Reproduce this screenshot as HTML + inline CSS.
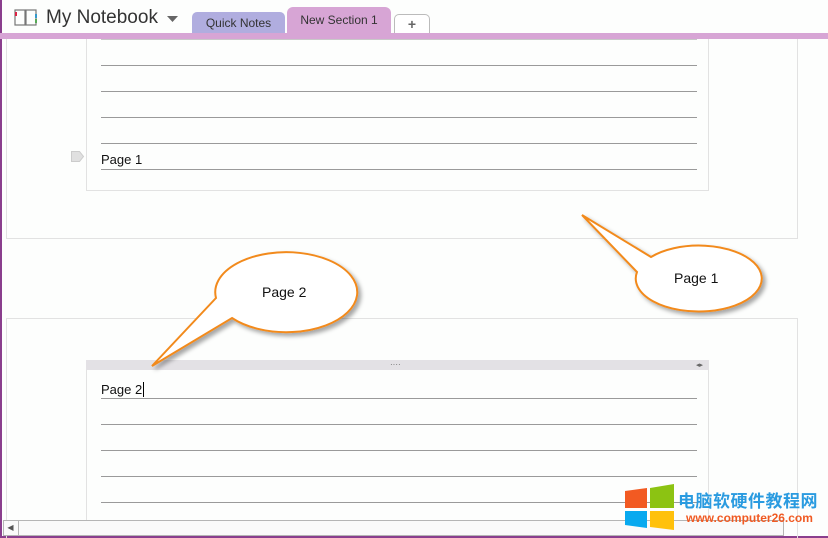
<!DOCTYPE html>
<html><head><meta charset="utf-8"><style>
*{margin:0;padding:0;box-sizing:border-box}
body{width:828px;height:538px;overflow:hidden;background:#fdfefd;font-family:"Liberation Sans",sans-serif;position:relative}
.a{position:absolute}
.line{position:absolute;left:101px;width:596px;height:1px;background:#9a9a9a}
.pt{position:absolute;left:101px;font-size:13px;color:#111}
</style></head><body>
<div class="a" style="left:0;top:0;width:2px;height:538px;background:#8a3e8d"></div>
<div class="a" style="left:0;top:536px;width:828px;height:2px;background:#8a3e8d"></div>
<!-- header -->
<svg class="a" style="left:14px;top:9px" width="26" height="18"><rect x="1" y="1" width="10" height="15" fill="none" stroke="#777" stroke-width="1.2"/><rect x="12" y="1" width="10" height="15" fill="none" stroke="#777" stroke-width="1.2"/><rect x="1" y="3" width="2" height="4" fill="#d24"/><rect x="21" y="5" width="2" height="4" fill="#39c"/><rect x="21" y="10" width="2" height="4" fill="#5a5"/></svg>
<div class="a" style="left:46px;top:7px;font-size:19px;color:#333">My Notebook</div>
<svg class="a" style="left:167px;top:16px" width="12" height="7"><path d="M0 0h11L5.5 6z" fill="#666"/></svg>
<div class="a" style="left:192px;top:12px;width:93px;height:22px;background:#b0addf;border-radius:5px 5px 0 0;font-size:12px;color:#333;text-align:center;line-height:22px">Quick Notes</div>
<div class="a" style="left:287px;top:7px;width:104px;height:27px;background:#d7a5d5;border-radius:6px 6px 0 0;font-size:12px;color:#333;text-align:center;line-height:26px">New Section 1</div>
<div class="a" style="left:394px;top:14px;width:36px;height:20px;background:#fff;border:1px solid #bbb;border-bottom:none;border-radius:5px 5px 0 0;font-size:14px;font-weight:bold;color:#666;text-align:center;line-height:18px">+</div>
<div class="a" style="left:0;top:33px;width:828px;height:6px;background:#d7a5d5"></div>
<!-- page 1 -->
<div class="a" style="left:6px;top:39px;width:792px;height:200px;border:1px solid #e2e2e2;border-top:none"></div>
<div class="a" style="left:86px;top:39px;width:623px;height:152px;border:1px solid #e2e2e2;border-top:none"></div>
<div class="line" style="top:39px;background:#c8c8c8"></div>
<div class="line" style="top:65px"></div><div class="line" style="top:91px"></div><div class="line" style="top:117px"></div><div class="line" style="top:143px"></div><div class="line" style="top:169px"></div>
<svg class="a" style="left:71px;top:151px" width="14" height="12"><path d="M0.5 0.5h8l4 5-4 5h-8z" fill="#e0e0e0" stroke="#ccc"/></svg>
<div class="pt" style="top:152px">Page 1</div>
<!-- page 2 -->
<div class="a" style="left:6px;top:318px;width:792px;height:220px;border:1px solid #e2e2e2;border-bottom:none"></div>
<div class="a" style="left:86px;top:360px;width:623px;height:170px;border:1px solid #e2e2e2;border-bottom:none"></div>
<div class="a" style="left:86px;top:360px;width:623px;height:10px;background:#e3e1e5"></div>
<div class="a" style="left:390px;top:362px;font-size:8px;color:#666;line-height:6px">····</div>
<div class="a" style="left:696px;top:361px;font-size:7px;color:#666">◂▸</div>
<div class="pt" style="top:382px">Page 2<span style="border-left:1px solid #000;margin-left:1px"></span></div>
<div class="line" style="top:398px"></div><div class="line" style="top:424px"></div><div class="line" style="top:450px"></div><div class="line" style="top:476px"></div><div class="line" style="top:502px"></div>
<!-- scrollbar -->
<div class="a" style="left:3px;top:520px;width:781px;height:16px;background:#fafafa;border:1px solid #b5b5b5"></div>
<div class="a" style="left:3px;top:520px;width:16px;height:16px;border-right:1px solid #b5b5b5;font-size:8px;color:#555;text-align:center;line-height:15px">◀</div>
<!-- callouts -->
<svg class="a" style="left:0;top:0" width="828" height="538">
<defs><filter id="s"><feDropShadow dx="3" dy="3" stdDeviation="2" flood-color="#000" flood-opacity="0.35"/></filter></defs>
<g filter="url(#s)" fill="#fff" stroke="#f28a1c" stroke-width="2">
<path d="M651 257 L582 215 L637 272 A63 33 0 1 0 651 257 Z"/>
<path d="M216 298 L152 366 L232 318 A71 40 0 1 0 216 298 Z"/>
</g>
<text x="674" y="283" font-size="14" font-family="Liberation Sans" fill="#111">Page 1</text>
<text x="262" y="297" font-size="14" font-family="Liberation Sans" fill="#111">Page 2</text>
</svg>
<!-- watermark -->
<svg class="a" style="left:624px;top:484px" width="52" height="46"><path d="M1 7l22-3v20H1z" fill="#f25a22"/><path d="M26 4l24-4v24H26z" fill="#8cc312"/><path d="M1 27h22v17L1 41z" fill="#08a9ef"/><path d="M26 27h24v19l-24-3z" fill="#ffc10c"/></svg>
<div class="a" style="left:678px;top:487px;font-size:17px;font-weight:bold;color:#2a9be0;font-family:'Liberation Sans','Noto Sans CJK SC',sans-serif;letter-spacing:0.5px">电脑软硬件教程网</div>
<div class="a" style="left:686px;top:511px;font-size:12px;font-weight:bold;color:#f05a23">www.computer26.com</div>
</body></html>
